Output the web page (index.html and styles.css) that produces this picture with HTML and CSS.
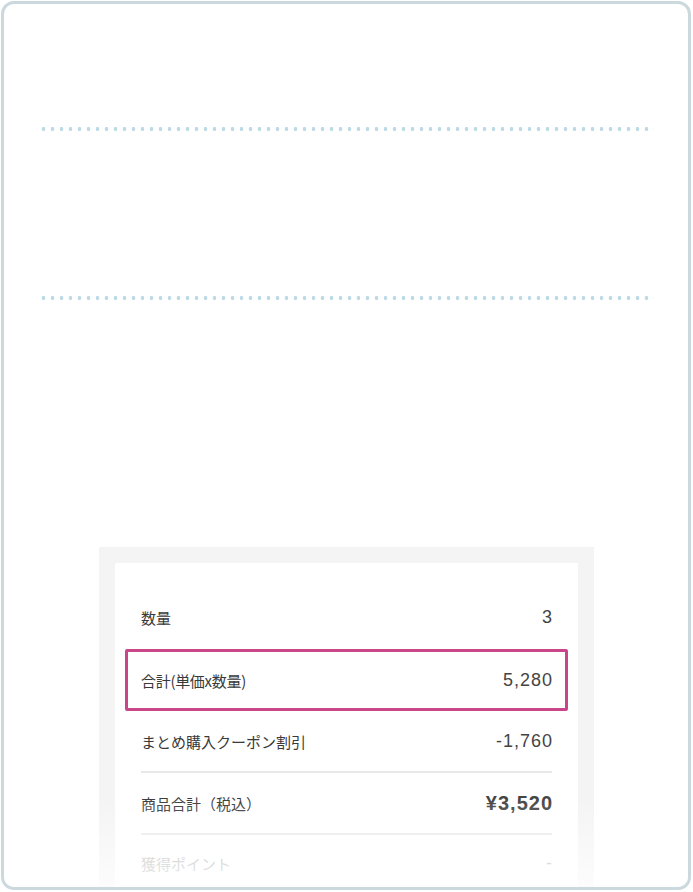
FILE: index.html
```html
<!DOCTYPE html>
<html lang="ja">
<head>
<meta charset="utf-8">
<link rel="stylesheet" href="styles.css">
</head>
<body>
<div class="frame">
  <div class="dots dots-1"></div>
  <div class="dots dots-2"></div>
  <div class="panel">
    <div class="card">
      <div class="row">
        <span class="label">数量</span>
        <span class="value">3</span>
      </div>
      <div class="row row-hl">
        <span class="label">合計(単価x数量)</span>
        <span class="value">5,280</span>
      </div>
      <div class="row row-sep">
        <span class="label">まとめ購入クーポン割引</span>
        <span class="value">-1,760</span>
      </div>
      <div class="row row-sep">
        <span class="label">商品合計（税込）</span>
        <span class="value value-bold">¥3,520</span>
      </div>
      <div class="row row-muted">
        <span class="label">獲得ポイント</span>
        <span class="value">-</span>
      </div>
    </div>
  </div>
  <div class="fade"></div>
</div>
</body>
</html>
```

FILE: styles.css
```css
* { box-sizing: border-box; }
html, body {
  margin: 0;
  padding: 0;
  background: #ffffff;
}
body {
  padding: 1px 2px 2px 1px;
  font-family: "Liberation Sans", "Noto Sans CJK JP", sans-serif;
  color: #333333;
}
.frame {
  position: relative;
  width: 690px;
  height: 889px;
  border: 3px solid #cbd8de;
  border-radius: 13px;
  overflow: hidden;
  background: #ffffff;
  padding: 123px 34px 0 35px;
}
.dots {
  height: 4px;
  background-image: radial-gradient(circle, #bcd9e6 1.7px, transparent 2.1px);
  background-size: 9px 4px;
  background-position: 0 0;
  background-repeat: repeat-x;
}
.dots-2 {
  margin-top: 165px;
}
.panel {
  width: 495px;
  margin: 247px auto 0 auto;
  background: #f4f4f4;
  padding: 16px 16px 0 16px;
}
.card {
  background: #ffffff;
  padding: 24px 26px 0 26px;
  height: 330px;
}
.row {
  display: flex;
  justify-content: space-between;
  align-items: center;
  height: 62px;
  padding-bottom: 2px;
}
.row-hl {
  margin: 0 -16px;
  padding: 0 13px;
  border: 3px solid #c9468b;
  border-radius: 2px;
}
.row-sep {
  border-bottom: 2px solid #e8e8e8;
  padding-bottom: 0;
}
.row-muted {
  padding-bottom: 6px;
}
.label {
  font-family: "Noto Sans CJK JP", sans-serif;
  font-size: 15px;
  color: #3a3a3a;
}
.row-hl .label {
  letter-spacing: -0.3px;
}
.value {
  font-family: "Liberation Sans", sans-serif;
  font-size: 18px;
  letter-spacing: 1px;
  margin-right: -1px;
  color: #444444;
}
.value-bold {
  font-weight: bold;
  font-size: 20px;
  letter-spacing: 1px;
}
.row-muted .label,
.row-muted .value {
  color: #b5b5b5;
}
.fade {
  position: absolute;
  left: 0;
  right: 0;
  bottom: 0;
  height: 90px;
  background: linear-gradient(to bottom, rgba(255,255,255,0) 0%, rgba(255,255,255,0.75) 100%);
  pointer-events: none;
}
```
